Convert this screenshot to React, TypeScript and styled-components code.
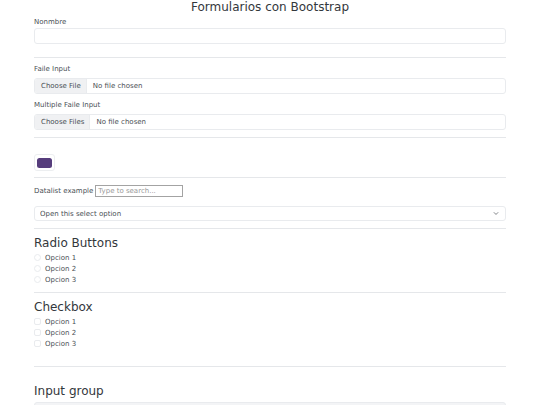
import styled, { createGlobalStyle } from 'styled-components';

const GlobalStyle = createGlobalStyle`
  html, body {
    margin: 0;
    padding: 0;
    background: #fff;
  }
  body {
    font-family: "DejaVu Sans", "Liberation Sans", sans-serif;
    color: #2f3338;
  }
  * {
    box-sizing: border-box;
  }
`;

const Page = styled.div`
  padding: 0 34px;
  width: 540px;
`;

const Title = styled.h1`
  margin: 0;
  font-size: 12px;
  font-weight: 400;
  line-height: 15px;
  text-align: center;
  color: #33373c;
`;

const Field = styled.div<{ $top?: number }>`
  margin-top: ${(p) => p.$top ?? 0}px;
`;

const Label = styled.label<{ $gap?: number }>`
  display: block;
  font-size: 7px;
  line-height: 10px;
  color: #4a4f55;
  margin-bottom: ${(p) => p.$gap ?? 4}px;
`;

const TextInput = styled.input`
  display: block;
  width: 100%;
  height: 16px;
  border: 1px solid #e9ebee;
  border-radius: 3px;
  background: #fff;
  font-family: inherit;
  font-size: 7px;
  outline: none;
`;

const FileInput = styled.input`
  display: block;
  width: 100%;
  height: 16px;
  border: 1px solid #e9ebee;
  border-radius: 3px;
  background: #fff;
  font-family: inherit;
  font-size: 7px;
  line-height: 14px;
  color: #4a4f55;
  overflow: hidden;
  padding: 0;

  &::file-selector-button {
    height: 14px;
    margin: 0 6px 0 0;
    padding: 0 5px 0 6px;
    border: none;
    border-right: 1px solid #e9ebee;
    border-radius: 0;
    background: #f0f1f3;
    font-family: inherit;
    font-size: 7px;
    color: #4a4f55;
  }
`;

const Rule = styled.hr<{ $top: number }>`
  margin: ${(p) => p.$top}px 0 0;
  border: none;
  border-top: 1px solid #e5e7ea;
  height: 0;
`;

const ColorInput = styled.input`
  display: block;
  width: 21px;
  height: 17px;
  margin-top: 16px;
  padding: 2.5px 2px;
  border: 1px solid #eceef0;
  border-radius: 3px;
  background: #fff;
  cursor: pointer;
  -webkit-appearance: none;
  appearance: none;

  &::-webkit-color-swatch-wrapper {
    padding: 0;
  }
  &::-webkit-color-swatch {
    border: none;
    border-radius: 2.5px;
  }
`;

const DatalistRow = styled.div`
  display: flex;
  align-items: center;
  gap: 2px;
  margin-top: 7px;
  font-size: 7px;
`;

const InlineLabel = styled.label`
  font-size: 7px;
  line-height: 10px;
  color: #4a4f55;
`;

const SearchInput = styled.input`
  width: 88px;
  height: 12px;
  padding: 0 2px;
  border: 1px solid #a3a3a3;
  border-radius: 0;
  font-family: inherit;
  font-size: 7px;
  color: #4a4f55;
  outline: none;

  &::placeholder {
    color: #999;
  }
`;

const SelectWrap = styled.div`
  position: relative;
  margin-top: 9px;
`;

const Select = styled.select`
  display: block;
  width: 100%;
  height: 15px;
  padding: 0 16px 0 5px;
  border: 1px solid #e9ebee;
  border-radius: 3px;
  background: #fff;
  font-family: inherit;
  font-size: 7px;
  color: #4a4f55;
  -webkit-appearance: none;
  appearance: none;
  outline: none;
`;

const Chevron = styled.svg`
  position: absolute;
  right: 7px;
  top: 5px;
  width: 6px;
  height: 5px;
  pointer-events: none;
`;

const Heading = styled.h3<{ $top: number }>`
  margin: ${(p) => p.$top}px 0 0;
  font-size: 12px;
  font-weight: 400;
  line-height: 16px;
  color: #33373c;
`;

const CheckList = styled.div`
  margin-top: 1px;
`;

const CheckRow = styled.div`
  display: flex;
  align-items: center;
  height: 11px;
  gap: 4px;
  font-size: 7px;
  color: #4a4f55;
`;

const Mark = styled.input<{ $round?: boolean }>`
  -webkit-appearance: none;
  appearance: none;
  margin: 0;
  width: 7px;
  height: 7px;
  border: 1px solid #e9ebee;
  border-radius: ${(p) => (p.$round ? '50%' : '2px')};
  background: #fff;
  flex: none;
`;

const OptionLabel = styled.label`
  line-height: 10px;
`;

const Group = styled.div`
  margin-top: 3px;
  height: 16px;
  border: 1px solid #e9ebee;
  border-radius: 3px;
  background: #f3f4f6;
`;

const options = ['Opcion 1', 'Opcion 2', 'Opcion 3'];

function App() {
  return (
    <>
      <GlobalStyle />
      <Page>
        <Title>Formularios con Bootstrap</Title>

        <Field $top={2}>
          <Label htmlFor="nombre" $gap={1}>Nonmbre</Label>
          <TextInput id="nombre" type="text" />
        </Field>

        <Rule $top={13} />

        <Field $top={6}>
          <Label htmlFor="file">Faile Input</Label>
          <FileInput id="file" type="file" />
        </Field>

        <Field $top={6}>
          <Label htmlFor="files">Multiple Faile Input</Label>
          <FileInput id="files" type="file" multiple />
        </Field>

        <Rule $top={7} />

        <ColorInput type="color" defaultValue="#563d7c" title="Choose your color" />

        <Rule $top={6} />

        <DatalistRow>
          <InlineLabel htmlFor="ciudades">Datalist example</InlineLabel>
          <SearchInput id="ciudades" list="ciudadesOptions" placeholder="Type to search..." />
          <datalist id="ciudadesOptions">
            <option value="San Francisco" />
            <option value="New York" />
            <option value="Seattle" />
          </datalist>
        </DatalistRow>

        <SelectWrap>
          <Select defaultValue="">
            <option value="">Open this select option</option>
            <option value="1">One</option>
            <option value="2">Two</option>
            <option value="3">Three</option>
          </Select>
          <Chevron viewBox="0 0 16 16">
            <path d="M2 5l6 6 6-6" fill="none" stroke="#343a40" strokeWidth="2" strokeLinecap="round" strokeLinejoin="round" />
          </Chevron>
        </SelectWrap>

        <Rule $top={7} />

        <Heading $top={6}>Radio Buttons</Heading>
        <CheckList>
          {options.map((o, i) => (
            <CheckRow key={o}>
              <Mark $round type="radio" name="radio" id={`radio${i}`} />
              <OptionLabel htmlFor={`radio${i}`}>{o}</OptionLabel>
            </CheckRow>
          ))}
        </CheckList>

        <Rule $top={7} />

        <Heading $top={6}>Checkbox</Heading>
        <CheckList>
          {options.map((o, i) => (
            <CheckRow key={o}>
              <Mark type="checkbox" id={`check${i}`} />
              <OptionLabel htmlFor={`check${i}`}>{o}</OptionLabel>
            </CheckRow>
          ))}
        </CheckList>

        <Rule $top={17} />

        <Heading $top={16}>Input group</Heading>
        <Group />
      </Page>
    </>
  );
}

export default App;
